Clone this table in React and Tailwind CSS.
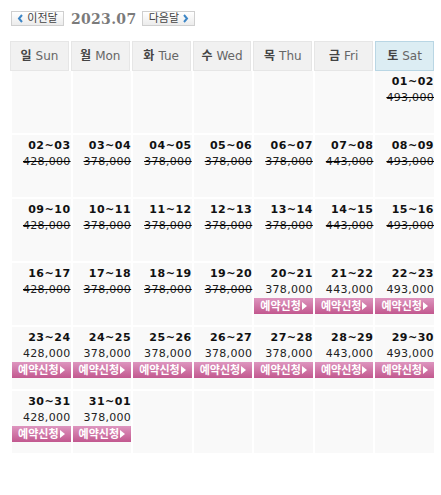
import React from "react";

const weekdays = [
  { ko: "일", en: "Sun" },
  { ko: "월", en: "Mon" },
  { ko: "화", en: "Tue" },
  { ko: "수", en: "Wed" },
  { ko: "목", en: "Thu" },
  { ko: "금", en: "Fri" },
  { ko: "토", en: "Sat" },
];

const prices = ["428,000", "378,000", "378,000", "378,000", "378,000", "443,000", "493,000"];

// 날짜 칸 만들기 (7월 1일 = 토요일)
function buildCells() {
  const cells = [];
  for (let i = 0; i < 6; i++) cells.push(null);
  for (let d = 1; d <= 31; d++) {
    const next = d === 31 ? 1 : d + 1;
    const pad = (n) => String(n).padStart(2, "0");
    const idx = cells.length % 7;
    cells.push({
      label: `${pad(d)}~${pad(next)}`,
      price: prices[idx],
      open: d >= 20,
    });
  }
  while (cells.length % 7 !== 0) cells.push(null);
  return cells;
}

const sans = { fontFamily: '"DejaVu Sans", "Noto Sans CJK KR", sans-serif' };

function NavButton({ children }) {
  return (
    <button
      className="h-[15px] w-[53px] flex items-center justify-center gap-[3px] border border-[#cfcfcf] bg-gradient-to-b from-white to-[#ececec] text-[11px] text-[#444] leading-none"
      style={sans}
    >
      {children}
    </button>
  );
}

function Chevron({ dir }) {
  return (
    <svg width="7" height="9" viewBox="0 0 7 9">
      <path
        d={dir === "left" ? "M5 1 L2 4.5 L5 8" : "M2 1 L5 4.5 L2 8"}
        fill="none"
        stroke="#3d86c6"
        strokeWidth="2"
      />
    </svg>
  );
}

export default function App() {
  const cells = buildCells();
  return (
    <div className="w-[441px] h-[495px] bg-white" style={sans}>
      {/* 상단 네비 */}
      <div className="flex items-center pt-[11px] pl-[11px] h-[26px]">
        <NavButton>
          <Chevron dir="left" />
          이전달
        </NavButton>
        <span
          className="ml-[7px] mr-[6px] text-[14px] font-bold text-[#7b7b7b] leading-none tracking-[0.3px]"
          style={{ fontFamily: '"DejaVu Serif", serif' }}
        >
          2023.07
        </span>
        <NavButton>
          다음달
          <Chevron dir="right" />
        </NavButton>
      </div>

      {/* 요일 */}
      <div className="mt-[15px] ml-[10px] w-[424px] grid grid-cols-7 gap-x-[2px]">
        {weekdays.map((w, i) => (
          <div
            key={i}
            className={`h-[30px] flex items-center justify-center gap-[4px] border text-[12px] ${
              i === 6 ? "bg-[#dcedf3] border-[#b9d6e4]" : "bg-[#f1f1f1] border-[#e6e6e6]"
            } text-[#666]`}
          >
            <span className="font-bold text-[#444]">{w.ko}</span>
            <span>{w.en}</span>
          </div>
        ))}
      </div>

      {/* 날짜 */}
      <div className="ml-[12px] w-[422px] grid grid-cols-7 gap-x-[2px] gap-y-[2px]">
        {cells.map((c, i) => (
          <div key={i} className="h-[62px] bg-[#f9f9f9] flex flex-col items-end">
            {c && (
              <>
                <div className="mt-[4px] h-[14px] text-[11px] font-bold text-[#111] leading-[14px] tracking-[0.5px]">
                  {c.label}
                </div>
                <div
                  className={`mt-[1px] h-[15px] text-[11px] leading-[15px] text-[#222] tracking-[0.3px] ${
                    c.open ? "" : "line-through decoration-black"
                  }`}
                >
                  {c.price}
                </div>
                {c.open && (
                  <button className="mt-[1px] w-full h-[16px] flex items-center justify-center gap-[1px] bg-gradient-to-b from-[#dd95bf] to-[#c2588f] text-white text-[11px] font-bold leading-none">
                    예약신청
                    <svg width="5" height="8" viewBox="0 0 5 8">
                      <path d="M0 0 L5 4 L0 8 Z" fill="white" />
                    </svg>
                  </button>
                )}
              </>
            )}
          </div>
        ))}
      </div>
    </div>
  );
}
